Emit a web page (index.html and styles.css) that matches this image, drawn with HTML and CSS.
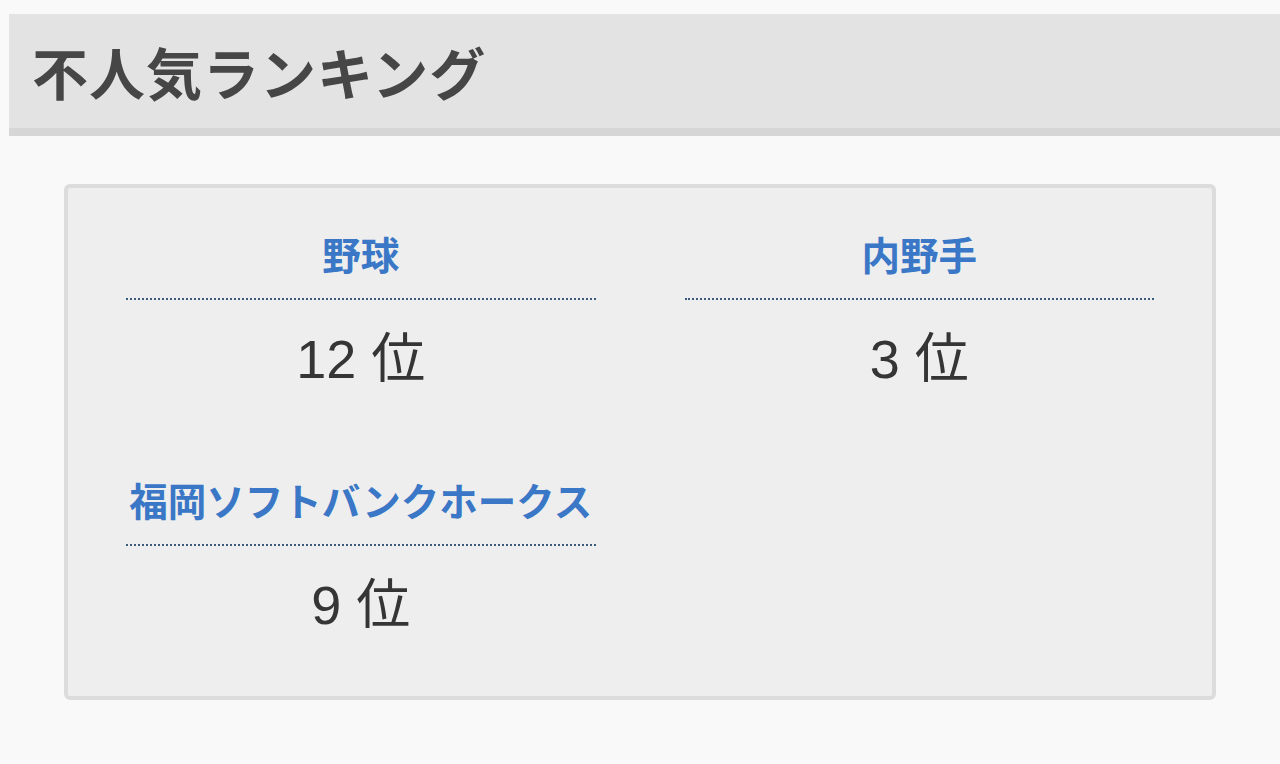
FILE: index.html
```html
<!DOCTYPE html>
<html lang="ja">
<head>
<meta charset="utf-8">
<title>不人気ランキング</title>
<link rel="stylesheet" href="styles.css">
</head>
<body>
<div class="page">
  <header class="title-bar">
    <h1 class="title">不人気ランキング</h1>
  </header>
  <section class="card">
    <div class="grid">
      <div class="item">
        <div class="label">野球</div>
        <div class="rank">12 位</div>
      </div>
      <div class="item">
        <div class="label">内野手</div>
        <div class="rank">3 位</div>
      </div>
      <div class="item">
        <div class="label">福岡ソフトバンクホークス</div>
        <div class="rank">9 位</div>
      </div>
    </div>
  </section>
</div>
</body>
</html>
```

FILE: styles.css
```css
html, body {
  margin: 0;
  padding: 0;
  background: #f9f9f9;
}
body {
  font-family: "Liberation Sans", "Noto Sans CJK JP", sans-serif;
}
.page {
  padding-top: 14px;
}
.title-bar {
  margin-left: 9px;
  background: #e3e3e3;
  border-bottom: 8px solid #d6d6d6;
  height: 114px;
  display: flex;
  align-items: center;
  padding-left: 23px;
}
.title {
  margin: 0;
  font-family: "Noto Sans CJK JP", sans-serif;
  font-size: 56px;
  font-weight: 700;
  color: #464646;
  line-height: 1;
  letter-spacing: 1px;
}
.card {
  margin: 48px 64px 0;
  background: #eeeeee;
  border: 4px solid #dcdcdc;
  border-radius: 6px;
  padding: 39px 58px 56px;
}
.grid {
  display: grid;
  grid-template-columns: 1fr 1fr;
  column-gap: 89px;
  row-gap: 79px;
}
.item {
  display: flex;
  flex-direction: column;
  align-items: stretch;
}
.label {
  font-family: "Noto Sans CJK JP", sans-serif;
  font-weight: 700;
  font-size: 38.5px;
  line-height: 53px;
  color: #3a77c6;
  text-align: center;
  padding-bottom: 18px;
  border-bottom: 2px dotted #3b5a80;
  white-space: nowrap;
}
.rank {
  margin-top: 24px;
  font-size: 54px;
  line-height: 70px;
  color: #353535;
  text-align: center;
}
```
